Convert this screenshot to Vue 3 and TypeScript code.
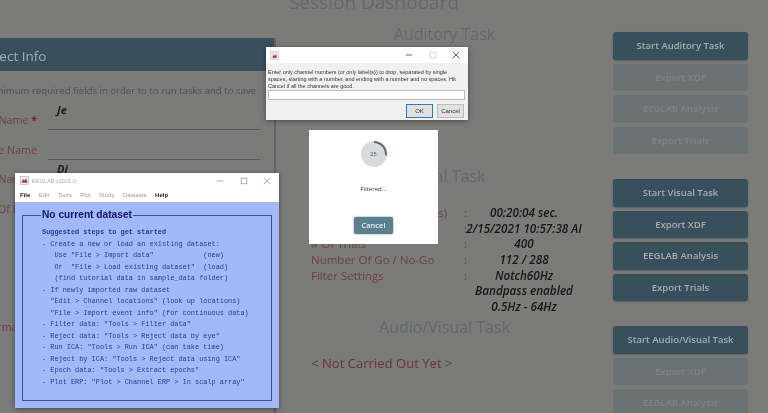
<template>
  <div class="desktop">
    <div class="dashboard">
      <section class="info-panel">
        <h2 class="panel-title">Subject Info</h2>
        <p class="panel-hint"><span>Fill in the minimum required fields in order to to run tasks and to save</span></p>
        <div v-for="(row, i) in subjectRows" :key="i" class="field-row">
          <span class="field-label">{{ row.label }}<b v-if="row.required" class="required"> *</b></span>
          <span class="field-value">{{ row.value }}</span>
        </div>
      </section>

      <main class="session">
        <h1 class="session-title">Session Dashboard</h1>
        <h3 class="task-title">Auditory Task</h3>
        <h3 class="task-title visual-title">Visual Task</h3>
        <div class="stats">
          <template v-for="stat in visualStats" :key="stat.label + stat.value">
            <span class="stat-label">{{ stat.label }}</span>
            <span class="stat-colon">{{ stat.label ? ':' : '' }}</span>
            <span class="stat-value">{{ stat.value }}</span>
          </template>
        </div>
        <h3 class="task-title av-title">Audio/Visual Task</h3>
        <p class="not-done"><i>&lt;</i> Not Carried Out Yet <i>&gt;</i></p>
      </main>

      <aside class="actions">
        <div v-for="(group, i) in buttonGroups" :key="i" class="action-group">
          <button
            v-for="btn in group"
            :key="btn.label"
            class="action-btn"
            :class="{ 'is-off': btn.off }"
          >{{ btn.label }}</button>
        </div>
      </aside>
    </div>

    <!-- channel prompt -->
    <div class="win prompt">
      <div class="win-bar">
        <svg class="app-icon" viewBox="0 0 12 12"><rect x="1" y="1" width="10" height="10" fill="#e9e6e6" stroke="#aaa" stroke-width=".6"/><path d="M3 9l2-4 1.5 1.5L8 4l1 5z" fill="#a5393c"/></svg>
        <div class="win-controls dim-controls">
          <svg viewBox="0 0 10 10"><path d="M1 5h8" stroke="#444" /></svg>
          <svg viewBox="0 0 10 10"><rect x="1.5" y="1.5" width="7" height="7" fill="none" stroke="#ccc" /></svg>
          <svg viewBox="0 0 10 10"><path d="M1 1l8 8M9 1l-8 8" stroke="#333" /></svg>
        </div>
      </div>
      <div class="prompt-body">
        <p class="prompt-text">Enter only channel numbers (or only label(s)) to drop, separated by single spaces, starting with a number, and ending with a number and no spaces. Hit Cancel if all the channels are good.</p>
        <div class="prompt-input"></div>
        <div class="prompt-btns">
          <span class="prompt-btn is-default">OK</span>
          <span class="prompt-btn">Cancel</span>
        </div>
      </div>
    </div>

    <!-- progress modal -->
    <div class="progress-modal">
      <div class="spinner"><span>25</span></div>
      <p class="progress-text">Filtered...</p>
      <span class="progress-cancel">Cancel</span>
    </div>

    <!-- EEGLAB main window -->
    <div class="win eeglab">
      <div class="win-bar eeglab-bar">
        <svg class="app-icon" viewBox="0 0 12 12"><rect x=".5" y=".5" width="11" height="11" fill="#eee" stroke="#999" stroke-width=".6"/><path d="M2 9l2.5-5 1.5 2L8 3l2 6z" fill="#a5393c"/></svg>
        <span class="eeglab-name">EEGLAB v2021.0</span>
        <div class="win-controls">
          <svg viewBox="0 0 10 10"><path d="M1 5h8" stroke="#999" /></svg>
          <svg viewBox="0 0 10 10"><rect x="1.5" y="1.5" width="7" height="7" fill="none" stroke="#999" /></svg>
          <svg viewBox="0 0 10 10"><path d="M1 1l8 8M9 1l-8 8" stroke="#999" /></svg>
        </div>
      </div>
      <nav class="menu">
        <span v-for="m in menuItems" :key="m.label" :class="{ strong: m.strong }">{{ m.label }}</span>
      </nav>
      <div class="eeglab-body">
        <fieldset class="dataset-frame">
          <legend>No current dataset</legend>
          <pre v-for="(line, i) in helpLines" :key="i" class="help-line" :class="{ first: i === 0 }">{{ line }}</pre>
        </fieldset>
      </div>
    </div>
  </div>
</template>

<script setup lang="ts">
interface SubjectRow {
  label: string
  value?: string
  required?: boolean
}

interface ActionButton {
  label: string
  off?: boolean
}

const subjectRows: SubjectRow[] = [
  { label: 'Subject Name', value: 'Je', required: true },
  { label: 'Session File Name' },
  { label: 'Last Name', value: 'Di', required: true },
  { label: 'Date Of Birth' },
  { label: '' },
  { label: '' },
  { label: '' },
  { label: 'Information' },
  { label: '' },
  { label: '' }
]

const visualStats = [
  { label: 'Session Duration (mm:ss)', value: '00:20:04 sec.' },
  { label: 'Date / Time', value: '2/15/2021 10:57:38 AI' },
  { label: '# Of Trials', value: '400' },
  { label: 'Number Of Go / No-Go', value: '112 / 288' },
  { label: 'Filter Settings', value: 'Notch60Hz' },
  { label: '', value: 'Bandpass enabled' },
  { label: '', value: '0.5Hz - 64Hz' }
]

const buttonGroups: ActionButton[][] = [
  [
    { label: 'Start Auditory Task' },
    { label: 'Export XDF', off: true },
    { label: 'EEGLAB Analysis', off: true },
    { label: 'Export Trials', off: true }
  ],
  [
    { label: 'Start Visual Task' },
    { label: 'Export XDF' },
    { label: 'EEGLAB Analysis' },
    { label: 'Export Trials' }
  ],
  [
    { label: 'Start Audio/Visual Task' },
    { label: 'Export XDF', off: true },
    { label: 'EEGLAB Analysis', off: true }
  ]
]

const menuItems = [
  { label: 'File', strong: true },
  { label: 'Edit' },
  { label: 'Tools' },
  { label: 'Plot' },
  { label: 'Study' },
  { label: 'Datasets' },
  { label: 'Help', strong: true }
]

const helpLines = [
  'Suggested steps to get started',
  '- Create a new or load an existing dataset:',
  '   Use "File > Import data"            (new)',
  '   Or  "File > Load existing dataset"  (load)',
  '   (find tutorial data in sample_data folder)',
  '- If newly imported raw dataset',
  '  "Edit > Channel locations" (look up locations)',
  '  "File > Import event info" (for continuous data)',
  '- Filter data: "Tools > Filter data"',
  '- Reject data: "Tools > Reject data by eye"',
  '- Run ICA: "Tools > Run ICA" (can take time)',
  '- Reject by ICA: "Tools > Reject data using ICA"',
  '- Epoch data: "Tools > Extract epochs"',
  '- Plot ERP: "Plot > Channel ERP > In scalp array"'
]
</script>

<style scoped>
.desktop {
  position: relative;
  width: 768px;
  height: 413px;
  overflow: hidden;
  background: #7b7b79;
  font-family: "Open Sans", "Noto Sans", sans-serif;
}

.dashboard {
  display: flex;
  height: 413px;
  filter: blur(0.5px);
}

/* left card, runs off the page on the left */
.info-panel {
  flex: none;
  width: 346px;
  margin: 38px 0 0 -70px;
  border-right: 2px solid #5f6364;
  box-sizing: border-box;
}

.panel-title {
  margin: 0;
  height: 33px;
  padding-left: 42px;
  background: #37505c;
  color: #a3aeb3;
  font-size: 13.5px;
  font-weight: 400;
  line-height: 36px;
}

.panel-hint {
  display: flex;
  justify-content: flex-end;
  margin: 0;
  height: 34px;
  padding: 12px 18px 0 0;
  box-sizing: border-box;
  white-space: nowrap;
  font-size: 9.6px;
  line-height: 16px;
  color: #4e5152;
}

.panel-hint span {
  flex: none;
}

.field-row {
  display: flex;
  height: 29.5px;
  box-sizing: border-box;
}

.field-label {
  flex: none;
  width: 107px;
  margin-right: 11px;
  white-space: nowrap;
  text-align: right;
  color: #6d3e45;
  font-size: 10.7px;
  line-height: 30px;
}

.required {
  color: #7a2730;
}

.field-value {
  width: 203px;
  height: 20px;
  margin-top: 4px;
  border-bottom: 1.5px solid #575a5b;
  color: #1d1d1d;
  font-size: 11px;
  font-weight: 700;
  font-style: italic;
  line-height: 2px;
  padding-left: 9px;
  box-sizing: content-box;
}

.session {
  flex: none;
  width: 337px;
}

.session-title {
  margin: -13px 0 0;
  padding-right: 141px;
  height: 34px;
  text-align: center;
  color: #62696b;
  font-size: 19px;
  font-weight: 400;
  line-height: 30px;
}

.task-title {
  margin: 0;
  text-align: center;
  color: #62696b;
  font-size: 16px;
  font-weight: 400;
  line-height: 26px;
}

.visual-title {
  margin-top: 116px;
}

.stats {
  display: grid;
  grid-template-columns: 153px 6px 108px;
  grid-auto-rows: 15.7px;
  margin: 16px 0 0 35px;
  font-size: 11.5px;
  line-height: 15.7px;
  white-space: nowrap;
}

.stat-label {
  color: #6d3e45;
}

.stat-colon {
  color: #4a4d4e;
}

.stat-value {
  display: flex;
  justify-content: center;
  font-size: 11.7px;
  font-weight: 600;
  font-style: italic;
  color: #161616;
}

.av-title {
  margin-top: -1px;
}

.not-done {
  margin: 13px 0 0 35px;
  color: #6d3339;
  font-size: 13.1px;
  line-height: 20px;
}

.not-done i {
  font-style: normal;
  color: #47494a;
}

.actions {
  flex: none;
  display: flex;
  flex-direction: column;
  gap: 25px;
  width: 135px;
  margin-top: 32px;
}

.action-group {
  display: flex;
  flex-direction: column;
  gap: 4px;
}

.action-btn {
  height: 27.5px;
  padding: 0;
  border: 0;
  border-radius: 3px;
  background: #37505c;
  color: #a3aeb3;
  font-family: inherit;
  font-size: 9.5px;
  font-weight: 600;
  box-shadow: 0 1px 2px #5c6062;
}

.action-btn.is-off {
  background: #6b7274;
  color: #7d8486;
  box-shadow: none;
}

/* desktop windows over the dashboard */
.win {
  position: absolute;
  background: #fff;
  box-shadow: 0 1px 5px rgba(30, 30, 30, 0.55);
}

.win-bar {
  display: flex;
  align-items: center;
}

.app-icon {
  width: 9px;
  height: 9px;
  flex: none;
}

.win-controls {
  display: flex;
  gap: 15.5px;
  margin-left: auto;
}

.win-controls svg {
  width: 8px;
  height: 8px;
  stroke-width: 1;
}

.prompt {
  left: 266px;
  top: 47px;
  width: 202px;
  height: 73px;
  background: #f0f0f0;
  filter: blur(0.3px);
}

.prompt .win-bar {
  height: 16px;
  padding: 0 8px 0 4px;
  background: #fff;
}

.prompt-body {
  padding: 6px 2px 0 2px;
}

.prompt-text {
  margin: 0;
  font-family: "Liberation Sans", Arial, sans-serif;
  font-size: 5.5px;
  line-height: 7px;
  color: #333;
}

.prompt-input {
  height: 8px;
  margin: 0 1px 0 0;
  background: #fff;
  border: 1px solid #bbb;
}

.prompt-btns {
  display: flex;
  justify-content: flex-end;
  gap: 4px;
  margin: 4px 2px 0 0;
}

.prompt-btn {
  width: 25px;
  height: 12px;
  background: #e1e1e1;
  border: 1px solid #bcbcbc;
  font-family: "Liberation Sans", Arial, sans-serif;
  font-size: 6px;
  line-height: 12px;
  text-align: center;
  color: #333;
}

.prompt-btn.is-default {
  border-color: #2a7bc0;
}

.progress-modal {
  position: absolute;
  left: 309px;
  top: 130px;
  width: 129px;
  height: 114px;
  display: flex;
  flex-direction: column;
  align-items: center;
  background: #fff;
  filter: blur(0.3px);
}

.spinner {
  width: 26px;
  height: 26px;
  margin-top: 11px;
  border-radius: 50%;
  background: conic-gradient(#566b76 0 27%, #d9dadb 27% 100%);
  display: flex;
  align-items: center;
  justify-content: center;
}

.spinner span {
  width: 23px;
  height: 23px;
  border-radius: 50%;
  background: #d9dadb;
  font-size: 5.5px;
  line-height: 23px;
  text-align: center;
  color: #555;
}

.progress-text {
  margin: 18px 0 0;
  font-size: 6px;
  line-height: 9px;
  color: #333;
}

.progress-cancel {
  width: 39px;
  height: 17px;
  margin-top: 23px;
  border-radius: 2px;
  background: #5a8090;
  box-shadow: 0 0 2px #777;
  color: #e5edf0;
  font-size: 7.5px;
  font-weight: 600;
  line-height: 17px;
  text-align: center;
}

.eeglab {
  left: 15px;
  top: 173px;
  width: 264px;
  height: 235px;
  display: flex;
  flex-direction: column;
  filter: blur(0.35px);
}

.eeglab-bar {
  height: 15px;
  padding: 0 8px 0 5px;
  gap: 3px;
}

.eeglab-name {
  font-family: "Liberation Sans", Arial, sans-serif;
  font-size: 5.6px;
  color: #aaa;
}

.menu {
  display: flex;
  gap: 8.5px;
  height: 14px;
  padding-left: 5px;
  font-family: "Liberation Sans", Arial, sans-serif;
  font-size: 6px;
  line-height: 15px;
  color: #999;
}

.menu .strong {
  color: #222;
  font-weight: 700;
}

.eeglab-body {
  flex: 1;
  padding: 8px 7px 7px;
  background: #a3b8f8;
  display: flex;
}

.dataset-frame {
  flex: 1;
  min-width: 0;
  margin: 0;
  padding: 6px 0 0 19px;
  border: 1px solid #3e5284;
}

legend {
  position: relative;
  top: -1px;
  margin-left: -1px;
  padding: 0 1px;
  font-family: "Liberation Sans", Arial, sans-serif;
  font-size: 10.2px;
  font-weight: 700;
  line-height: 11px;
  color: #10186e;
}

.help-line {
  margin: 0;
  height: 11.5px;
  font-family: "Liberation Mono", "Courier New", monospace;
  font-size: 6.9px;
  line-height: 11.5px;
  color: #2a3a90;
}

.help-line.first {
  font-weight: 700;
}
</style>
